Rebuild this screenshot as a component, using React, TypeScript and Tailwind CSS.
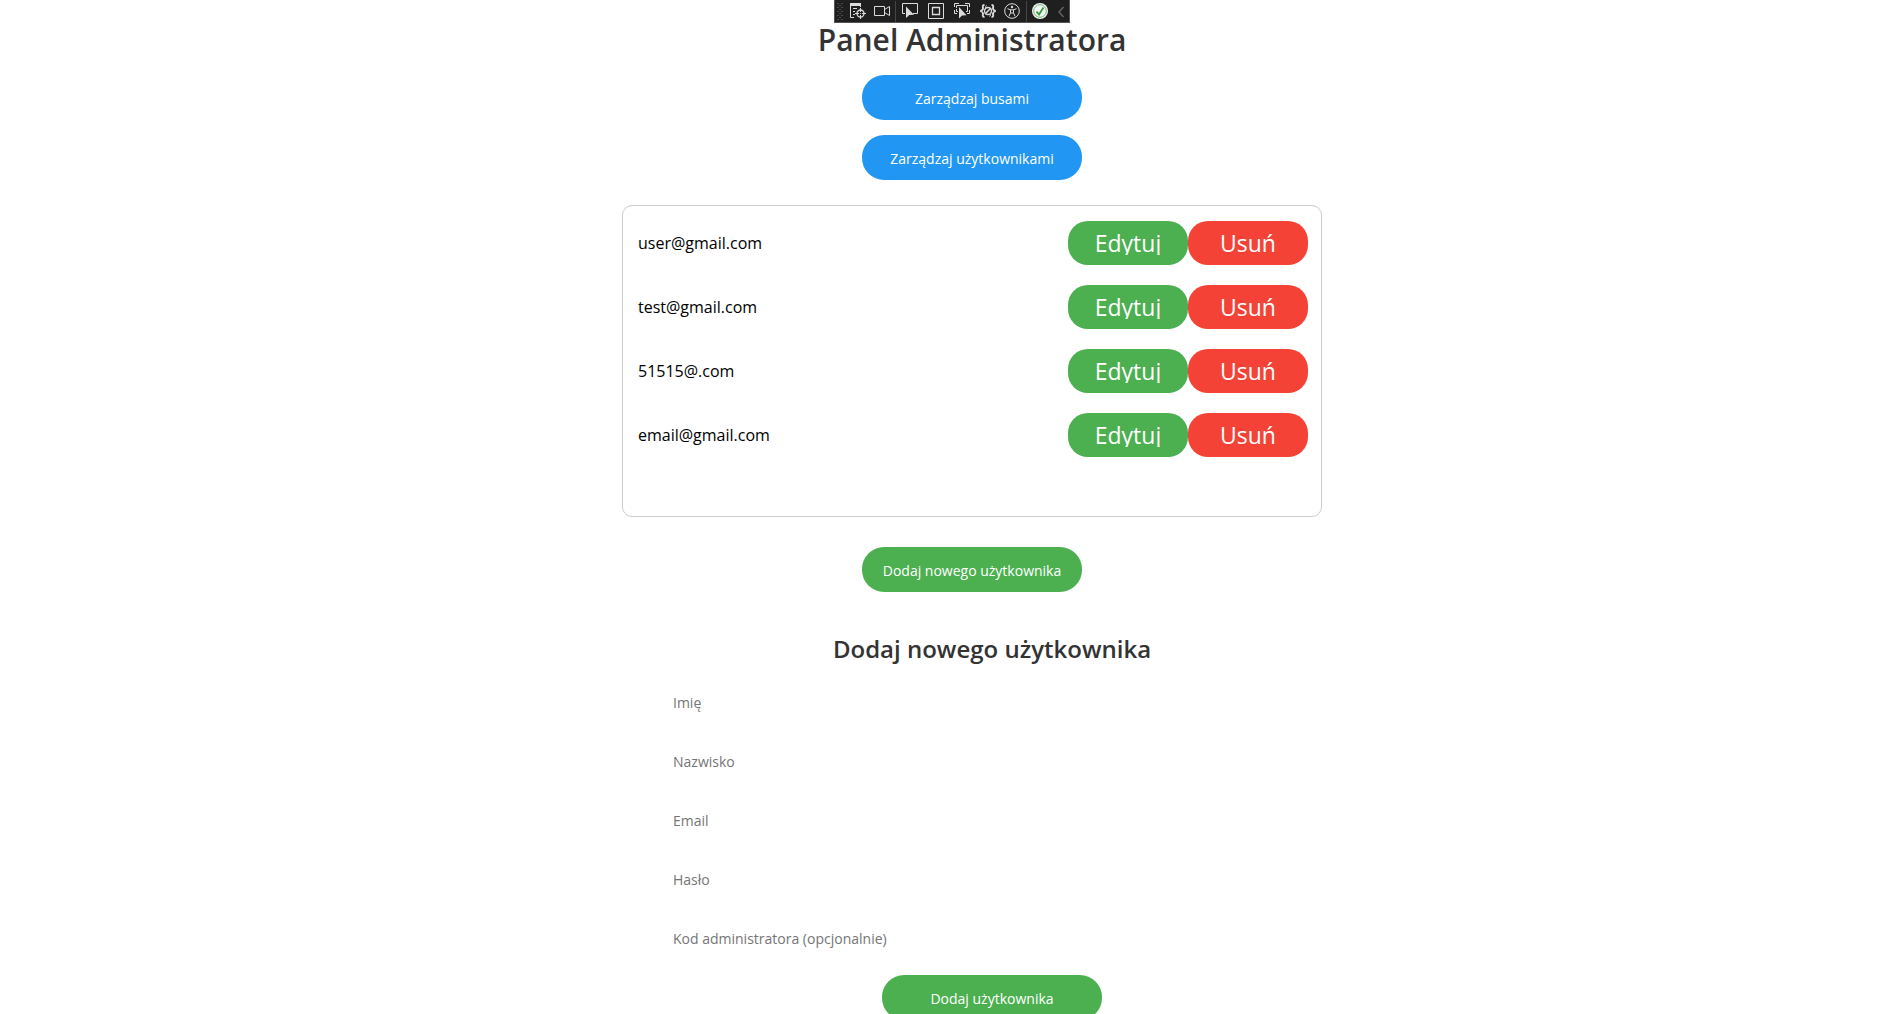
import type { ReactNode } from 'react';

const users = ['user@gmail.com', 'test@gmail.com', '51515@.com', 'email@gmail.com'];

const fields = [
  { id: 'first-name', label: 'Imię', type: 'text' },
  { id: 'last-name', label: 'Nazwisko', type: 'text' },
  { id: 'email', label: 'Email', type: 'email' },
  { id: 'password', label: 'Hasło', type: 'password' },
  { id: 'admin-code', label: 'Kod administratora (opcjonalnie)', type: 'text' },
];

function Tool({ label, children }: { label: string; children: ReactNode }) {
  return (
    <button type="button" aria-label={label} className="size-4 shrink-0">
      <svg viewBox="0 0 16 16" className="size-4" fill="none" stroke="#dcdcdc" strokeWidth="1">
        {children}
      </svg>
    </button>
  );
}

function DebugToolbar() {
  return (
    <div
      role="toolbar"
      aria-label="Narzędzia debugowania"
      className="absolute top-0 left-1/2 ml-[-115px] flex h-[23px] w-[236px] items-center border-x border-b border-[#555555] bg-[#1f1f1f] pr-1 pl-[2px]"
    >
      <svg viewBox="0 0 6 17" className="mr-[7px] h-[17px] w-[6px] shrink-0" fill="#4a4a4a">
        {[0, 4, 8, 12, 16].map((y) => (
          <path key={y} d={`M0 ${y}h2v1h-2zM4 ${y}h2v1h-2z`} />
        ))}
        {[2, 6, 10, 14].map((y) => (
          <path key={y} d={`M2 ${y}h2v1h-2z`} />
        ))}
      </svg>
      <div className="flex gap-2">
        <Tool label="Drzewo elementów">
          <path d="M0 0h11v3H0z" fill="#dcdcdc" stroke="none" />
          <path d="M.5 3v11.5H4M10.5 3v1M3 5.5h4M3 8.5h2M3 11.5h2" />
          <circle cx="10.5" cy="10.5" r="3.5" strokeWidth="1.3" />
          <path d="M10.5 5v4M10.5 12v4M5 10.5h4M12 10.5h4" />
          <circle cx="10.5" cy="10.5" r=".6" fill="#dcdcdc" stroke="none" />
        </Tool>
        <Tool label="Kamera">
          <path d="M.5 3.5h10v9H.5z" />
          <path d="M10.5 6.5 15.5 3.5v9l-5-3" />
        </Tool>
      </div>
      <span className="mr-[6px] ml-[5px] h-[21px] w-px bg-[#464646]" />
      <div className="flex gap-[10px]">
        <Tool label="Wybierz element">
          <path d="M3 10.5H.5V.5h15v10H11" />
          <path d="M4 3.5v11.5l3.2-3 4.8-.3z" fill="#dcdcdc" stroke="none" />
        </Tool>
        <Tool label="Ramki układu">
          <path d="M.5.5h15v15H.5z" />
          <path d="M4.5 4.5h7v7h-7z" strokeWidth="1.3" />
        </Tool>
        <Tool label="Śledź fokus">
          <path d="M.5 4V.5H5M11 .5h4.500V4M.5 7v3.500H3M15.500 7v3.500H13M2.500 5V2.500h11v6H12M2.500 6v2.500H4" />
          <path d="M5 4v11.500l3-3 4.500-.3z" fill="#dcdcdc" stroke="none" />
        </Tool>
        <Tool label="Błędy powiązań">
          <path
            d="M4.500 2C2 2 3 4 3 5.500S1.500 7.500.7 8c.8.500 2.300 1 2.300 2.500S2 14 4.500 14M11.500 2C14 2 13 4 13 5.500s1.500 2 2.300 2.500c-.8.500-2.300 1-2.300 2.500s1 3.500-1.500 3.500"
            strokeWidth="1.9"
          />
          <path d="M6.500 2.500C5.200 3 6 5 5.500 6.500M9.500 13.500c1.300-.5.500-2.500 1-4" />
          <circle cx="8" cy="8" r="3.500" strokeWidth="1.300" />
          <path d="m5 11 6-6" strokeWidth="1.600" />
        </Tool>
      </div>
      <div className="ml-[8px] mr-px flex">
        <Tool label="Dostępność">
          <circle cx="8" cy="8" r="7.300" />
          <circle cx="8" cy="4" r="1.200" fill="#dcdcdc" stroke="none" />
          <path d="m3.500 5.700 3 1.100h3l3-1.100M6.500 6.800v3l-1.500 3.500M9.500 6.800v3l1.500 3.500M6.500 10h3" />
        </Tool>
      </div>
      <span className="mx-[5px] h-[21px] w-px bg-[#464646]" />
      <Tool label="Przeładowanie na gorąco">
        <circle cx="8" cy="8" r="8" fill="#f4f4f4" stroke="none" />
        <circle cx="8" cy="8" r="6.300" stroke="#70b873" />
        <path d="m4.500 8.500 2.500 3 4.500-7" stroke="#2f9e36" strokeWidth="1.800" />
      </Tool>
      <button type="button" aria-label="Zwiń" className="ml-[9px] h-4 w-2 shrink-0">
        <svg viewBox="0 0 8 16" className="h-4 w-2" fill="none" stroke="#6a6a6a" strokeWidth="1.300">
          <path d="M6.500 4 2 9l4.500 5" />
        </svg>
      </button>
    </div>
  );
}

function PillButton({ color, type = 'button', children }: { color: string; type?: 'button' | 'submit'; children: ReactNode }) {
  return (
    <button type={type} className={`h-[45px] w-[220px] rounded-[22px] pt-[2px] text-sm text-white ${color}`}>
      {children}
    </button>
  );
}

function RowButton({ color, children }: { color: string; children: ReactNode }) {
  return (
    <button type="button" className={`h-11 w-[120px] rounded-[20px] py-[10px] text-[23px] text-white ${color}`}>
      <span className="block h-6 overflow-hidden leading-6">{children}</span>
    </button>
  );
}

export default function App() {
  return (
    <div className="relative h-screen overflow-hidden bg-white font-['Open_Sans','Noto_Sans',sans-serif] text-black">
      <DebugToolbar />
      <main className="flex flex-col items-center pt-5 pl-[46px]">
        <h1 className="mb-[15px] text-[30px] leading-10 font-semibold text-[#333333]">Panel Administratora</h1>
        <nav className="flex flex-col gap-[15px]">
          <PillButton color="bg-[#2196f3]">Zarządzaj busami</PillButton>
          <PillButton color="bg-[#2196f3]">Zarządzaj użytkownikami</PillButton>
        </nav>
        <ul className="mt-[25px] mb-[30px] flex w-full max-w-[700px] flex-col gap-5 rounded-[10px] border border-[#cccccc] pt-[15px] pr-[13px] pb-[59px] pl-[15px]">
          {users.map((user) => (
            <li key={user} className="flex items-center">
              <span className="flex-1 text-base">{user}</span>
              <RowButton color="bg-[#4caf50]">Edytuj</RowButton>
              <RowButton color="bg-[#f44336]">Usuń</RowButton>
            </li>
          ))}
        </ul>
        <PillButton color="bg-[#4caf50]">Dodaj nowego użytkownika</PillButton>
        <form className="mt-10 flex w-full max-w-[700px] flex-col items-center pl-10">
          <h2 className="mb-[17px] text-2xl leading-[34px] font-semibold text-[#333333]">Dodaj nowego użytkownika</h2>
          <div className="mb-[17px] flex w-full flex-col gap-5">
            {fields.map(({ id, label, type }) => (
              <input
                key={id}
                id={id}
                type={type}
                aria-label={label}
                placeholder={label}
                className="h-[39px] w-full px-[11px] text-sm outline-none placeholder:text-[#757575]"
              />
            ))}
          </div>
          <PillButton color="bg-[#4caf50]" type="submit">
            Dodaj użytkownika
          </PillButton>
        </form>
      </main>
    </div>
  );
}
